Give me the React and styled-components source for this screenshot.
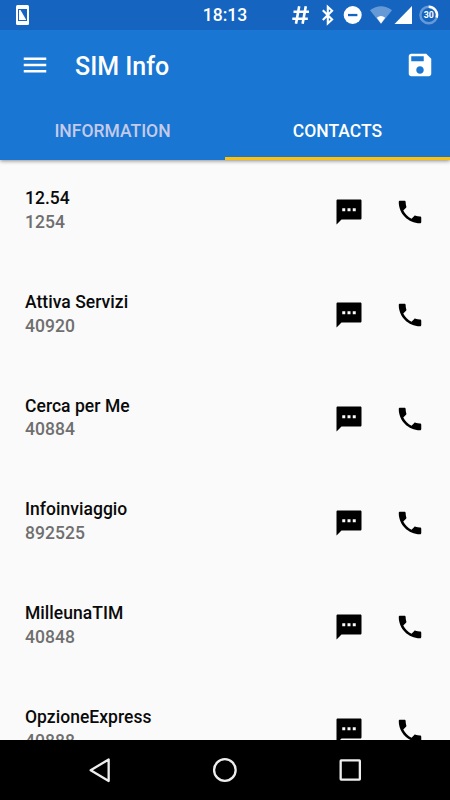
import React from 'react';
import styled, { createGlobalStyle } from 'styled-components';

const GlobalStyle = createGlobalStyle`
  * {
    box-sizing: border-box;
  }
  body {
    margin: 0;
    font-family: Roboto, sans-serif;
  }
`;

const Screen = styled.div`
  width: 450px;
  height: 800px;
  display: flex;
  flex-direction: column;
  overflow: hidden;
  background: #fafafa;
`;

const StatusBar = styled.div`
  position: relative;
  z-index: 2;
  flex: none;
  height: 30px;
  display: grid;
  grid-template-columns: 1fr auto 1fr;
  align-items: center;
  background: #1565c0;
  color: #fff;
  svg {
    display: block;
  }
`;

const Notifications = styled.div`
  padding-left: 15px;
`;

const Clock = styled.span`
  font-size: 17.5px;
  font-weight: 500;
  line-height: 30px;
`;

const SystemIcons = styled.div`
  display: flex;
  justify-content: flex-end;
  padding-right: 10px;
`;

const AppBar = styled.header`
  position: relative;
  z-index: 1;
  flex: none;
  background: #1976d2;
  box-shadow: 0 1px 4px rgba(0, 0, 0, 0.45);
`;

const Toolbar = styled.div`
  height: 70px;
  padding: 0 15px 0 20px;
  display: flex;
  align-items: center;
  color: #fff;
`;

const Title = styled.h1`
  flex: 1;
  margin: 0 0 0 25px;
  font-size: 25px;
  font-weight: 500;
  line-height: 30px;
  padding-top: 3px;
`;

const IconButton = styled.button`
  width: 30px;
  height: 30px;
  padding: 0;
  border: 0;
  background: none;
  color: inherit;
  svg {
    display: block;
    width: 30px;
    height: 30px;
    fill: currentColor;
  }
`;

const Tabs = styled.nav`
  height: 60px;
  display: flex;
`;

const Tab = styled.a`
  flex: 1;
  border-bottom: 3px solid ${props => props.$active ? '#ffc107' : 'transparent'};
  color: ${props => props.$active ? '#fff' : '#c5cae9'};
  font-size: 17.5px;
  font-weight: 500;
  line-height: 62px;
  text-align: center;
`;

const ContactList = styled.main`
  flex: 1;
  min-height: 0;
  overflow: hidden;
`;

const ContactRow = styled.div`
  height: 103.8px;
  padding: 0 25px;
  display: flex;
  align-items: center;
`;

const ContactText = styled.div`
  flex: 1;
  padding-bottom: 2.2px;
  font-size: 17.5px;
  font-weight: 500;
  line-height: 23.75px;
  letter-spacing: 0.04px;
`;

const Name = styled.div`
  color: #0a0a0a;
`;

const Number = styled.div`
  color: #6f6f6f;
`;

const Actions = styled.div`
  display: flex;
  gap: 31px;
  padding-bottom: 0.6px;
  color: #000;
`;

const NavBar = styled.footer`
  flex: none;
  height: 60px;
  padding: 0 37px;
  display: flex;
  background: #000;
  svg {
    flex: 1;
    height: 60px;
    fill: none;
    stroke: #eee;
    stroke-width: 2.3;
    stroke-linejoin: round;
  }
`;

const contacts = [
  { name: '12.54', number: '1254' },
  { name: 'Attiva Servizi', number: '40920' },
  { name: 'Cerca per Me', number: '40884' },
  { name: 'Infoinviaggio', number: '892525' },
  { name: 'MilleunaTIM', number: '40848' },
  { name: 'OpzioneExpress', number: '40888' },
];

const MaterialIcon = ({ d }) => (
  <svg viewBox="0 0 24 24"><path d={d} /></svg>
);

const icons = {
  menu: 'M3 18h18v-2H3v2zm0-5h18v-2H3v2zm0-7v2h18V6H3z',
  save: 'M17 3H5c-1.11 0-2 .9-2 2v14c0 1.1.89 2 2 2h14c1.1 0 2-.9 2-2V7l-4-4zm-5 16c-1.66 0-3-1.34-3-3s1.34-3 3-3 3 1.34 3 3-1.34 3-3 3zm3-10H5V5h10v4z',
  sms: 'M21 2H3c-.6 0-1 .4-1 1v19l4-4h15c.6 0 1-.4 1-1V3c0-.6-.4-1-1-1zM9 11.4H6.6V9H9v2.4zm4.2 0h-2.4V9h2.4v2.4zm4.2 0H15V9h2.4v2.4z',
  phone: 'M6.62 10.79c1.44 2.83 3.76 5.14 6.59 6.59l2.2-2.2c.27-.27.67-.36 1.02-.24 1.12.37 2.33.57 3.57.57.55 0 1 .45 1 1V20c0 .55-.45 1-1 1-9.39 0-17-7.61-17-17 0-.55.45-1 1-1h3.5c.55 0 1 .45 1 1 0 1.25.2 2.45.57 3.57.11.35.03.74-.25 1.02l-2.2 2.2z',
};

function StatusIcons() {
  return (
    <svg width="150" height="30" viewBox="290 0 150 30" fill="#fff">
      <path d="M299.2 6.3l-3.2 17.5M305.8 6.3l-3.2 17.5M293.5 11.8h15.5M292.3 18.7h15.5" fill="none" stroke="#fff" strokeWidth="2.6" />
      <path d="M322.8 10.2l9.3 9.2-4.3 4V6.8l4.3 4-9.3 9.2" fill="none" stroke="#fff" strokeWidth="2.1" />
      <circle cx="352.7" cy="15" r="9" />
      <rect x="348" y="13.9" width="9.4" height="2.3" fill="#1565c0" />
      <path d="M370 10.3Q381 2 392 10.3L381 24z" fillOpacity=".35" />
      <path d="M376.8 17.8Q381 14.4 385.2 17.8L381 23.5z" />
      <path d="M394.5 24L412 6V24z" />
      <circle cx="428.7" cy="15" r="8.3" fill="none" stroke="#fff" strokeOpacity=".35" strokeWidth="2.4" />
      <path d="M428.7 6.7A8.3 8.3 0 0 1 436.6 17.6" fill="none" stroke="#fff" strokeWidth="2.4" />
      <text x="428.7" y="18.2" fontSize="8.8" fontWeight="700" textAnchor="middle">30</text>
    </svg>
  );
}

function App() {
  return (
    <>
      <GlobalStyle />
      <Screen>
        <StatusBar>
          <Notifications>
            <svg width="15" height="20" viewBox="0 0 15 20">
              <rect x="1" width="13" height="20" rx="1.5" fill="#fff" />
              <rect x="3" y="4" width="9" height="12" fill="#1565c0" />
              <path d="M5 5h6v10z" fill="#1565c0" />
              <path d="M4 5h1.5L11 14.5v.5H4z" fill="#fff" />
            </svg>
          </Notifications>
          <Clock>18:13</Clock>
          <SystemIcons><StatusIcons /></SystemIcons>
        </StatusBar>
        <AppBar>
          <Toolbar>
            <IconButton aria-label="Menu"><MaterialIcon d={icons.menu} /></IconButton>
            <Title>SIM Info</Title>
            <IconButton aria-label="Save"><MaterialIcon d={icons.save} /></IconButton>
          </Toolbar>
          <Tabs>
            <Tab>INFORMATION</Tab>
            <Tab $active>CONTACTS</Tab>
          </Tabs>
        </AppBar>
        <ContactList>
          {contacts.map(contact => (
            <ContactRow key={contact.name}>
              <ContactText>
                <Name>{contact.name}</Name>
                <Number>{contact.number}</Number>
              </ContactText>
              <Actions>
                <IconButton aria-label="Message"><MaterialIcon d={icons.sms} /></IconButton>
                <IconButton aria-label="Call"><MaterialIcon d={icons.phone} /></IconButton>
              </Actions>
            </ContactRow>
          ))}
        </ContactList>
        <NavBar>
          <svg viewBox="0 0 125 60"><path d="M71.5 19.5v21.5L53.5 30.2z" /></svg>
          <svg viewBox="0 0 125 60"><circle cx="62.7" cy="30" r="10.8" /></svg>
          <svg viewBox="0 0 125 60"><rect x="52.5" y="20.4" width="19.2" height="19.2" rx=".5" /></svg>
        </NavBar>
      </Screen>
    </>
  );
}

export default App;
